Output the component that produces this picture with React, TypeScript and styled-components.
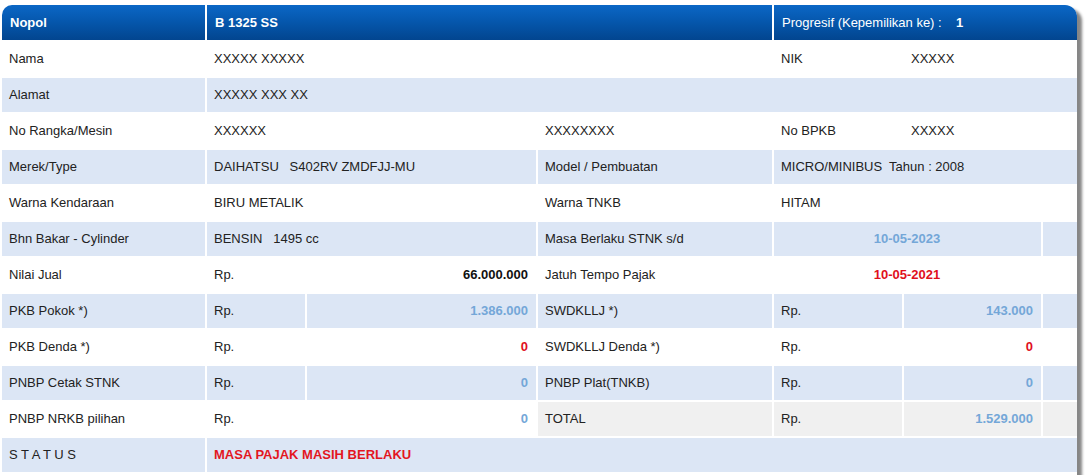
import React from 'react';
import styled, { createGlobalStyle, css } from 'styled-components';

const Global = createGlobalStyle`
  html, body { margin: 0; padding: 0; background: #fff; overflow: hidden; }
  body { font-family: "Liberation Sans", Arial, sans-serif; }
`;

const Page = styled.div`
  padding-top: 5px;
`;

const Sheet = styled.div`
  width: 1077px;
  box-sizing: border-box;
  padding: 0 0 40px 2px;
  background: #fff;
  border-radius: 10px 12px 0 0;
  box-shadow: 5px 4px 3px #868686;
  display: grid;
  grid-template-columns: 203px 98px 229px 234px 128px 137px 34px;
  grid-template-rows: 35px;
  grid-auto-rows: 34px;
  gap: 2px;
`;

const HeadCell = styled.div<{ $span?: number; $corner?: 'left' | 'right' }>`
  grid-column: span ${(p) => p.$span ?? 1};
  display: flex;
  align-items: center;
  padding: 0 8px 1px;
  background: linear-gradient(to bottom, #0b67c6 0%, #0556ab 50%, #02458f 100%);
  color: #fff;
  font-size: 13px;
  font-weight: bold;
  white-space: pre;
  ${(p) => p.$corner === 'left' && css`border-top-left-radius: 10px;`}
  ${(p) => p.$corner === 'right' && css`border-top-right-radius: 12px;`}
`;

const HeadLabel = styled.span`
  font-weight: normal;
`;

type Tone = 'text' | 'dark' | 'blue' | 'red' | 'status';
type Bg = 'white' | 'blue' | 'gray';

const toneColor: Record<Tone, string> = {
  text: '#222',
  dark: '#111',
  blue: '#74a7d8',
  red: '#e0101c',
  status: '#e3161f',
};

const bgColor: Record<Bg, string> = {
  white: '#fff',
  blue: '#dce6f5',
  gray: '#f0f0f0',
};

const Cell = styled.div<{ $span: number; $bg: Bg; $align: 'left' | 'right' | 'center'; $tone: Tone; $bold: boolean }>`
  grid-column: span ${(p) => p.$span};
  display: flex;
  align-items: center;
  justify-content: ${(p) => (p.$align === 'right' ? 'flex-end' : p.$align === 'center' ? 'center' : 'flex-start')};
  padding: 0 8px 1px 7px;
  background: ${(p) => bgColor[p.$bg]};
  color: ${(p) => toneColor[p.$tone]};
  font-size: 13px;
  font-weight: ${(p) => (p.$bold ? 'bold' : 'normal')};
  white-space: pre;
`;

type C = { t?: string; span?: number; align?: 'left' | 'right' | 'center'; tone?: Tone; bold?: boolean; bg?: Bg };
type Row = { bg: Bg; cells: C[] };

const num = (t: string, tone: Tone): C => ({ t, align: 'right', tone, bold: true });

const rows: Row[] = [
  { bg: 'white', cells: [{ t: 'Nama' }, { t: 'XXXXX XXXXX', span: 3 }, { t: 'NIK' }, { t: 'XXXXX', span: 2 }] },
  { bg: 'blue', cells: [{ t: 'Alamat' }, { t: 'XXXXX XXX XX', span: 6 }] },
  {
    bg: 'white',
    cells: [{ t: 'No Rangka/Mesin' }, { t: 'XXXXXX', span: 2 }, { t: 'XXXXXXXX' }, { t: 'No BPKB' }, { t: 'XXXXX', span: 2 }],
  },
  {
    bg: 'blue',
    cells: [
      { t: 'Merek/Type' },
      { t: 'DAIHATSU   S402RV ZMDFJJ-MU', span: 2 },
      { t: 'Model / Pembuatan' },
      { t: 'MICRO/MINIBUS  Tahun : 2008', span: 3 },
    ],
  },
  {
    bg: 'white',
    cells: [{ t: 'Warna Kendaraan' }, { t: 'BIRU METALIK', span: 2 }, { t: 'Warna TNKB' }, { t: 'HITAM', span: 3 }],
  },
  {
    bg: 'blue',
    cells: [
      { t: 'Bhn Bakar - Cylinder' },
      { t: 'BENSIN   1495 cc', span: 2 },
      { t: 'Masa Berlaku STNK s/d' },
      { t: '10-05-2023', span: 2, align: 'center', tone: 'blue', bold: true },
      {},
    ],
  },
  {
    bg: 'white',
    cells: [
      { t: 'Nilai Jual' },
      { t: 'Rp.' },
      num('66.000.000', 'dark'),
      { t: 'Jatuh Tempo Pajak' },
      { t: '10-05-2021', span: 2, align: 'center', tone: 'red', bold: true },
      {},
    ],
  },
  {
    bg: 'blue',
    cells: [
      { t: 'PKB Pokok *)' },
      { t: 'Rp.' },
      num('1.386.000', 'blue'),
      { t: 'SWDKLLJ *)' },
      { t: 'Rp.' },
      num('143.000', 'blue'),
      {},
    ],
  },
  {
    bg: 'white',
    cells: [
      { t: 'PKB Denda *)' },
      { t: 'Rp.' },
      num('0', 'red'),
      { t: 'SWDKLLJ Denda *)' },
      { t: 'Rp.' },
      num('0', 'red'),
      {},
    ],
  },
  {
    bg: 'blue',
    cells: [
      { t: 'PNBP Cetak STNK' },
      { t: 'Rp.' },
      num('0', 'blue'),
      { t: 'PNBP Plat(TNKB)' },
      { t: 'Rp.' },
      num('0', 'blue'),
      {},
    ],
  },
  {
    bg: 'white',
    cells: [
      { t: 'PNBP NRKB pilihan' },
      { t: 'Rp.' },
      num('0', 'blue'),
      { t: 'TOTAL', bg: 'gray' },
      { t: 'Rp.', bg: 'gray' },
      { ...num('1.529.000', 'blue'), bg: 'gray' },
      { bg: 'gray' },
    ],
  },
  {
    bg: 'blue',
    cells: [{ t: 'S T A T U S' }, { t: 'MASA PAJAK MASIH BERLAKU', span: 6, tone: 'status', bold: true }],
  },
];

export default function App() {
  return (
    <Page>
      <Global />
      <Sheet>
        <HeadCell $corner="left">Nopol</HeadCell>
        <HeadCell $span={3}>B 1325 SS</HeadCell>
        <HeadCell $span={3} $corner="right">
          <HeadLabel>{'Progresif (Kepemilikan ke) :'}</HeadLabel>
          {'    1'}
        </HeadCell>
        {rows.map((row, ri) =>
          row.cells.map((c, ci) => (
            <Cell
              key={`${ri}-${ci}`}
              $span={c.span ?? 1}
              $bg={c.bg ?? row.bg}
              $align={c.align ?? 'left'}
              $tone={c.tone ?? 'text'}
              $bold={!!c.bold}
            >
              {c.t ?? ''}
            </Cell>
          ))
        )}
      </Sheet>
    </Page>
  );
}
